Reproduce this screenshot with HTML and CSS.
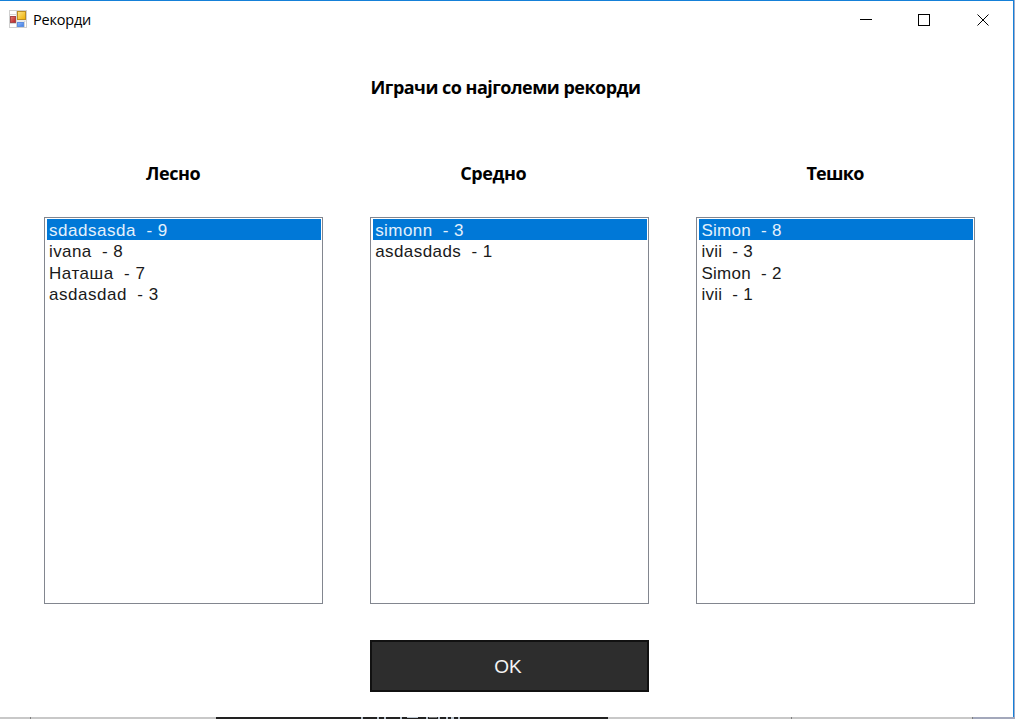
FILE: index.html
```html
<!DOCTYPE html>
<html lang="mk">
<head>
<meta charset="utf-8">
<title>Рекорди</title>
<link rel="stylesheet" href="styles.css">
</head>
<body>
<div class="window">
  <header class="titlebar">
    <svg class="app-icon" width="18" height="18" viewBox="0 0 18 18">
      <defs>
        <linearGradient id="gold" x2="1" y2="1"><stop stop-color="#ffe68a"/><stop offset="1" stop-color="#eeb000"/></linearGradient>
        <linearGradient id="red" x2="1" y2="1"><stop stop-color="#e88078"/><stop offset="1" stop-color="#b81c1c"/></linearGradient>
        <linearGradient id="blue" x2="1" y2="1"><stop stop-color="#90baff"/><stop offset="1" stop-color="#3f7be0"/></linearGradient>
      </defs>
      <rect x=".5" y=".5" width="17" height="17" fill="#fff" stroke="#cfcfcf"/>
      <path d="M1 4.500h6M7.500 1v16M1 13.500h6M8 11h9M15.500 11v6" stroke="#d6d6d6"/>
      <rect x="8.500" y="1.500" width="8" height="8" fill="url(#gold)" stroke="#bd8d20"/>
      <rect x="1.500" y="6.500" width="5" height="6" fill="url(#red)" stroke="#a54548"/>
      <rect x="8.500" y="12.500" width="6" height="4" fill="url(#blue)" stroke="#5d8fdf"/>
    </svg>
    <span class="caption">Рекорди</span>
    <svg class="controls" width="150" height="14" viewBox="0 0 150 14" fill="none" stroke="#000" shape-rendering="crispEdges">
      <path d="M0 6.500h12M58.500 1.500h11v11h-11z"/>
      <path d="M117.500 1.500l11 11m0-11l-11 11" shape-rendering="auto"/>
    </svg>
  </header>
  <main class="content">
    <h1 class="heading">Играчи со најголеми рекорди</h1>
    <div class="columns">
      <section class="column">
        <h2 class="level level-easy">Лесно</h2>
        <ul class="list"><li class="row selected wide">sdadsasda  - 9</li><li class="row">ivana  - 8</li><li class="row wide">Наташа  - 7</li><li class="row wide">asdasdad  - 3</li></ul>
      </section>
      <section class="column">
        <h2 class="level level-medium">Средно</h2>
        <ul class="list"><li class="row selected">simonn  - 3</li><li class="row">asdasdads  - 1</li></ul>
      </section>
      <section class="column">
        <h2 class="level level-hard">Тешко</h2>
        <ul class="list narrow"><li class="row selected">Simon  - 8</li><li class="row">ivii  - 3</li><li class="row">Simon  - 2</li><li class="row">ivii  - 1</li></ul>
      </section>
    </div>
    <button class="ok">OK</button>
  </main>
</div>
<div class="behind-right"></div>
<svg class="behind-bottom" width="1015" height="2" viewBox="0 0 1015 2" shape-rendering="crispEdges">
  <path fill="#c8c8c8" d="M0 0h1015v2H0z"/>
  <path fill="#222" d="M216 0h392v2H216z"/>
  <path fill="#a3a8bb" d="M972 0h43v2h-43z"/>
  <path fill="#808080" d="M30 0h1v2h-1zM791 0h1v2h-1zM972 0h1v2h-1z"/>
  <path fill="#b9c3cd" d="M361 0h2v2h-2zM377 0h2v2h-2zM384 0h2v2h-2zM400 0h2v2h-2zM407 0h11v1h-11zM426 0h2v2h-2zM438 0h2v2h-2zM446 0h2v2h-2zM451 0h3v2h-3zM458 0h2v2h-2z"/>
  <path fill="#777" d="M429 0h8v1h-8z"/>
</svg>
</body>
</html>
```
FILE: styles.css
```css
* { box-sizing: border-box; }
body {
  margin: 0; width: 1015px; height: 719px; overflow: hidden;
  display: grid; grid-template: 717px 2px / 1014px 1px;
  background: #fff; color: #000; font-family: "Liberation Sans", Arial, sans-serif;
}
.window { border-top: 1px solid #1580d8; border-right: 1px solid #1580d8; background: #fff; }
.titlebar { display: flex; height: 38px; padding: 9px 24px 0 9px; }
.caption { margin-left: 6px; font: 14.500px/20px "Open Sans", sans-serif; letter-spacing: -.2px; }
.controls { margin: 3px -21px 0 auto; }
.content { display: flex; flex-direction: column; }
.heading { margin: 35px 0 0 370.500px; font: bold 18px/26px "Open Sans", sans-serif; letter-spacing: -.52px; white-space: nowrap; }
.columns { display: flex; gap: 47.400px; margin: 60px 0 0 44px; }
.column { width: 278.800px; }
.level { margin: 0 0 31px; font: bold 18px/26px "Open Sans", sans-serif; letter-spacing: -.4px; }
.level-easy { padding-left: 102px; }
.level-medium { padding-left: 90px; }
.level-hard { padding-left: 110px; letter-spacing: -.7px; }
.list { height: 387px; margin: 0; padding: 1px 1px 2px 2px; border: 1px solid #82868f; list-style: none; }
.row { height: 21.300px; padding-left: 2px; font-size: 17px; line-height: 23px; letter-spacing: .42px; white-space: pre; color: #1a1a1a; }
.wide { letter-spacing: .52px; }
.narrow .row { letter-spacing: .28px; }
.selected { background: #0078d7; color: #e4f1fc; }
.ok {
  width: 279px; height: 52px; margin: 36px 0 0 370px; padding: 2px 3px 0 0; border: 2px solid #111;
  background: #2d2d2d; color: #f4f4f4; font: 19px "Liberation Sans", sans-serif;
}
.behind-right { background: #9eaccb; }
.behind-bottom { grid-column: 1 / 3; display: block; }
```
